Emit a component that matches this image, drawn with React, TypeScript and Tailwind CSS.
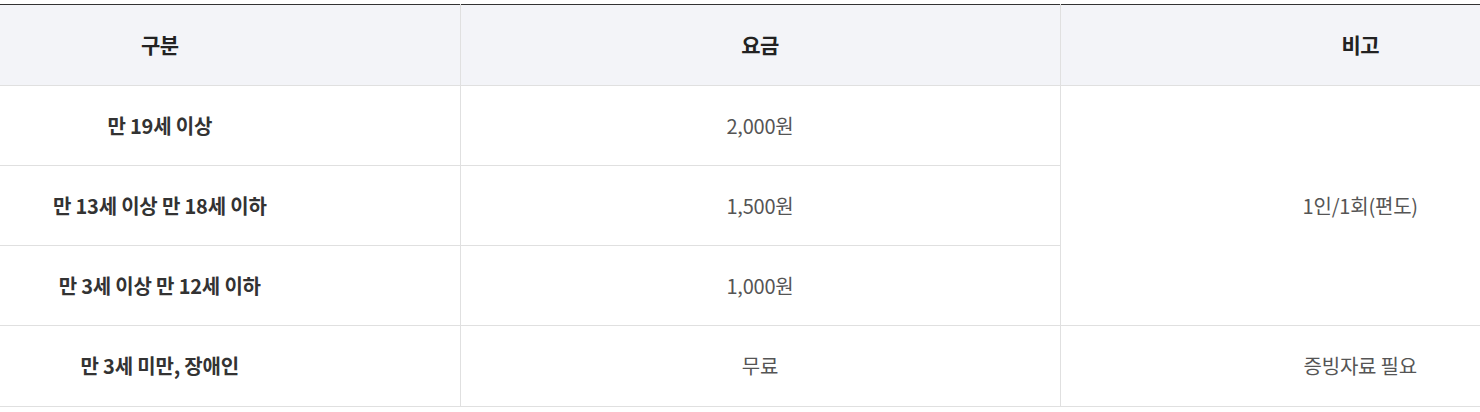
import React from 'react';

const rows = [
  { label: '만 19세 이상', price: '2,000원' },
  { label: '만 13세 이상 만 18세 이하', price: '1,500원' },
  { label: '만 3세 이상 만 12세 이하', price: '1,000원' },
];

function App() {
  return (
    <div className="w-[1480px] min-h-[412px] bg-white overflow-hidden pt-[4px]" style={{ fontFamily: '"Noto Sans CJK KR", "Noto Sans", sans-serif' }}>
      <table className="w-[1800px] ml-[-140px] border-collapse table-fixed border-t border-t-[#333]">
        <colgroup>
          <col className="w-[600px]" />
          <col className="w-[600px]" />
          <col className="w-[600px]" />
        </colgroup>
        <thead>
          <tr className="h-[81px] bg-[#f3f4f8]">
            <th className="border-b border-[#e0e0e0] text-[21px] font-bold text-[#222] tracking-[-0.5px]">구분</th>
            <th className="border-b border-l border-[#e0e0e0] text-[21px] font-bold text-[#222] tracking-[-0.5px]">요금</th>
            <th className="border-b border-l border-[#e0e0e0] text-[21px] font-bold text-[#222] tracking-[-0.5px]">비고</th>
          </tr>
        </thead>
        <tbody>
          {rows.map((r, i) => (
            <tr key={r.label} className="h-[80px]">
              <td className="border-b border-[#e0e0e0] text-center text-[20px] font-bold text-[#333] tracking-[-0.2px]">{r.label}</td>
              <td className="border-b border-l border-[#e0e0e0] text-center text-[20px] text-[#555] tracking-[-0.2px]">{r.price}</td>
              {i === 0 && (
                <td rowSpan={3} className="border-b border-l border-[#e0e0e0] text-center text-[20px] text-[#555] tracking-[-0.2px]">1인/1회(편도)</td>
              )}
            </tr>
          ))}
          <tr className="h-[81px]">
            <td className="border-b border-[#e0e0e0] text-center text-[20px] font-bold text-[#333] tracking-[-0.2px]">만 3세 미만, 장애인</td>
            <td className="border-b border-l border-[#e0e0e0] text-center text-[20px] text-[#555] tracking-[-0.2px]">무료</td>
            <td className="border-b border-l border-[#e0e0e0] text-center text-[20px] text-[#555] tracking-[-0.2px]">증빙자료 필요</td>
          </tr>
        </tbody>
      </table>
    </div>
  );
}

export default App;
